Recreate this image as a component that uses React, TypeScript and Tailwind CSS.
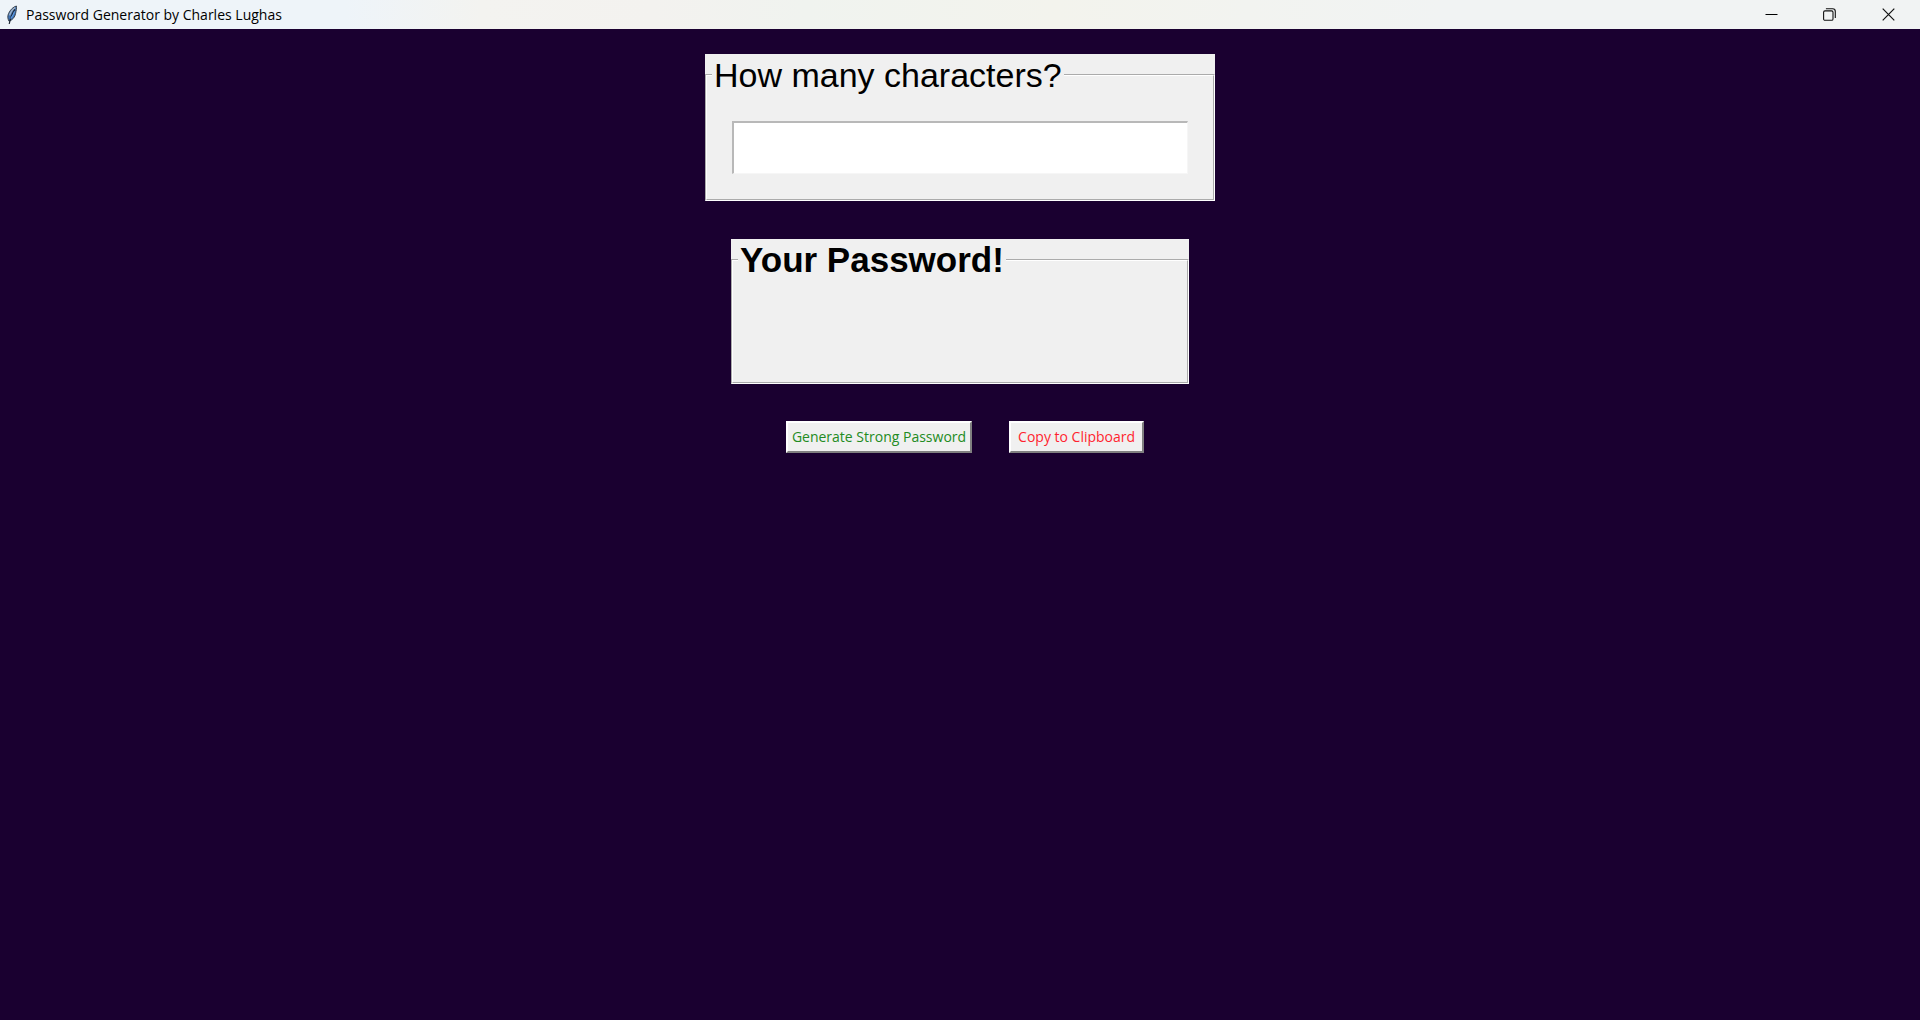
import type { ReactNode } from "react";

function Feather() {
  return (
    <svg width="12" height="20" viewBox="0 0 12 20" aria-hidden="true">
      <path d="M10.4 1C7.4 1.8 4.4 4.6 2.6 8.4C1.4 11 1.6 13.6 3 16.2C6.6 15 9 12 9.6 8.4C10.1 5.6 10.8 3.2 10.4 1Z" fill="#3f73b5" stroke="#39434f" strokeWidth="1" />
      <path d="M9.3 2.6C6.6 4.2 4.6 7 3.6 10.4" fill="none" stroke="#a3b4c6" strokeWidth="1.4" />
      <path d="M8.8 4.4C6.4 8 4.4 12 3.2 19" fill="none" stroke="#1d2733" strokeWidth="1.1" />
      <path d="M8.6 6.4C7.6 9.4 6.2 11.8 4.6 13.6" fill="none" stroke="#5b97e0" strokeWidth="1.2" />
    </svg>
  );
}

function TitleBar() {
  return (
    <header className="flex h-[29px] items-center justify-between bg-[linear-gradient(to_right,#eef4f9_18%,#f3f3f0_25%,#f3f2ef_34%,#f0f3ef_42%,#f3f3ed_55%,#f1f3f3_75%)]">
      <div className="flex items-center gap-2 pl-1.5">
        <Feather />
        <h1 className="text-[14px] leading-5 text-black">Password Generator by Charles Lughas</h1>
      </div>
      <div className="flex h-7 pr-0.5">
        <button type="button" aria-label="Minimize" className="flex w-[58px] items-center justify-center">
          <svg width="13" height="13" viewBox="0 0 13 13" stroke="#000" fill="none">
            <path d="M.5 6.5H12.5" />
          </svg>
        </button>
        <button type="button" aria-label="Restore" className="flex w-[58px] items-center justify-center">
          <svg width="13" height="13" viewBox="0 0 13 13" stroke="#111" strokeWidth="1.1" fill="none">
            <rect x="0.6" y="2.9" width="9.4" height="9.4" rx="1.4" />
            <path d="M2.9 .7H9.6A2.7 2.7 0 0 1 12.3 3.4V10" />
          </svg>
        </button>
        <button type="button" aria-label="Close" className="flex w-[60px] items-center justify-center">
          <svg width="13" height="13" viewBox="0 0 13 13" stroke="#111" strokeWidth="1.2" fill="none">
            <path d="M.7 .7L12.3 12.3M12.3 .7L.7 12.3" />
          </svg>
        </button>
      </div>
    </header>
  );
}

function ActionButton({ tone, children }: { tone: string; children: ReactNode }) {
  return (
    <button
      type="button"
      className={`h-8 border-2 border-t-white border-l-white border-r-[#808080] border-b-[#808080] bg-[#f0f0f0] text-[14px] leading-5 ${tone}`}
    >
      {children}
    </button>
  );
}

export default function App() {
  return (
    <div className="flex min-h-screen flex-col bg-[#1a0030] font-['Open_Sans','Noto_Sans',sans-serif]">
      <TitleBar />
      <main className="flex flex-col items-center pt-[25px]">
        <div className="bg-[#f0f0f0]">
          <fieldset className="border-2 border-white px-[25px] pb-[25px] [border-style:groove]">
            <legend className="-ml-5 px-0.5 font-['Liberation_Sans',Arial,sans-serif] text-[34px] leading-[42px] text-black">
              <label htmlFor="length">How many characters?</label>
            </legend>
            <input
              id="length"
              type="text"
              className="mt-[25px] block h-[53px] w-114 border-t-2 border-r border-b border-l-2 border-t-[#b8b8b8] border-r-[#f6f6f6] border-b-[#f6f6f6] border-l-[#b8b8b8] bg-white px-1 font-['Liberation_Sans',Arial,sans-serif] text-[32px] outline-none"
            />
          </fieldset>
        </div>
        <div className="mt-[38px] bg-[#f0f0f0]">
          <fieldset className="border-2 border-white px-[5px] [border-style:groove]">
            <legend className="px-0.5 font-['Liberation_Sans',Arial,sans-serif] text-[35px] leading-[42px] font-bold text-black">
              <label htmlFor="password">Your Password!</label>
            </legend>
            <input
              id="password"
              type="text"
              readOnly
              className="block h-[101px] w-[444px] bg-transparent font-['Liberation_Sans',Arial,sans-serif] text-[32px] outline-none"
            />
          </fieldset>
        </div>
        <div className="mt-[37px] flex gap-[37px] pl-2.5">
          <ActionButton tone="px-1 text-[#228b22]">Generate Strong Password</ActionButton>
          <ActionButton tone="px-[7px] text-[#ff1f2f]">Copy to Clipboard</ActionButton>
        </div>
      </main>
    </div>
  );
}
